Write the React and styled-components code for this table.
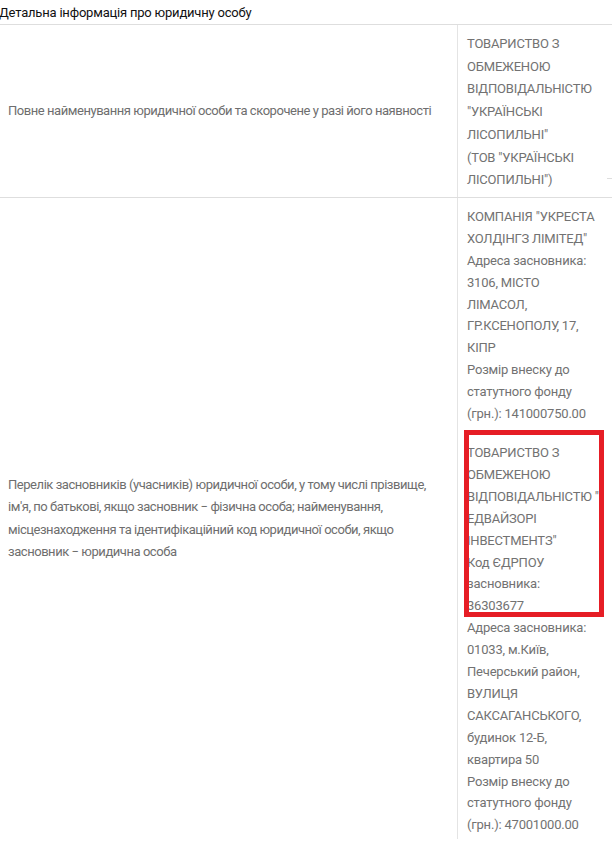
import React from "react";
import styled, { createGlobalStyle } from "styled-components";

//page defaults
const Global = createGlobalStyle`
  html, body {
    margin: 0;
    padding: 0;
    background: #fff;
  }
  body {
    font-family: Roboto, "Noto Sans", "Liberation Sans", sans-serif;
    font-size: 13px;
  }
`;

//caption above the table
const Caption = styled.div`
  height: 24px;
  line-height: 25px;
  color: #111;
  letter-spacing: -0.2px;
  border-bottom: 1px solid #dedede;
  white-space: nowrap;
  text-indent: -1px;
`;

//one row of the info table
const Row = styled.div`
  display: grid;
  grid-template-columns: 458px 148px 1fr;
  border-bottom: ${props => (props.last ? "none" : "1px solid #dedede")};
`;

//left cell with the field name
const Label = styled.div`
  display: flex;
  align-items: center;
  padding: 0 6px 0 8px;
  border-right: 1px solid #e4e4e4;
  color: #6e6e6e;
  letter-spacing: -0.45px;
  line-height: 22.5px;
`;

//right cell with the value
const Value = styled.div`
  padding: 8px 5px ${props => props.bottom}px 9px;
  color: #727272;
  letter-spacing: -0.2px;
  line-height: ${props => props.lh}px;
`;

//small stub of the next column's border
const Edge = styled.div`
  position: relative;
  &::after {
    content: "";
    position: absolute;
    left: 1px;
    right: 0;
    top: ${props => props.stub}px;
    border-top: 1px solid #dedede;
  }
`;

//one founder entry
const Founder = styled.div`
  margin-top: ${props => props.gap}px;
`;

//red frame drawn over part of a founder entry
const Marked = styled.div`
  position: relative;
  &::after {
    content: "";
    position: absolute;
    top: -12px;
    left: -3px;
    right: -3px;
    bottom: 0;
    border: 5px solid #e61d25;
    pointer-events: none;
  }
`;

function App() {
  return (
    <>
      <Global />
      <Caption>Детальна інформація про юридичну особу</Caption>
      <Row>
        <Label>
          Повне найменування юридичної особи та скорочене у разі його наявності
        </Label>
        <Value lh={22.7} bottom={5}>
          ТОВАРИСТВО З ОБМЕЖЕНОЮ ВІДПОВІДАЛЬНІСТЮ "УКРАЇНСЬКІ ЛІСОПИЛЬНІ"
          <br />
          (ТОВ "УКРАЇНСЬКІ ЛІСОПИЛЬНІ")
        </Value>
        <Edge stub={153} />
      </Row>
      <Row last>
        <Label>
          Перелік засновників (учасників) юридичної особи, у тому числі
          прізвище, ім'я, по батькові, якщо засновник − фізична особа;
          найменування, місцезнаходження та ідентифікаційний код юридичної
          особи, якщо засновник − юридична особа
        </Label>
        <Value lh={21.9} bottom={3}>
          <Founder gap={0}>
            <div>КОМПАНІЯ "УКРЕСТА ХОЛДІНГЗ ЛІМІТЕД"</div>
            <div>Адреса засновника: 3106, МІСТО ЛІМАСОЛ, ГР.КСЕНОПОЛУ, 17, КІПР</div>
            <div>Розмір внеску до статутного фонду (грн.): 141000750.00</div>
          </Founder>
          <Founder gap={17}>
            <Marked>
              <div>ТОВАРИСТВО З ОБМЕЖЕНОЮ ВІДПОВІДАЛЬНІСТЮ " ЕДВАЙЗОРІ ІНВЕСТМЕНТЗ"</div>
              <div>
                Код ЄДРПОУ засновника:
                <br />
                36303677
              </div>
            </Marked>
            <div>
              Адреса засновника: 01033, м.Київ, Печерський район, ВУЛИЦЯ
              САКСАГАНСЬКОГО, будинок 12-Б, квартира 50
            </div>
            <div>Розмір внеску до статутного фонду (грн.): 47001000.00</div>
          </Founder>
        </Value>
        <div />
      </Row>
    </>
  );
}

export default App;
